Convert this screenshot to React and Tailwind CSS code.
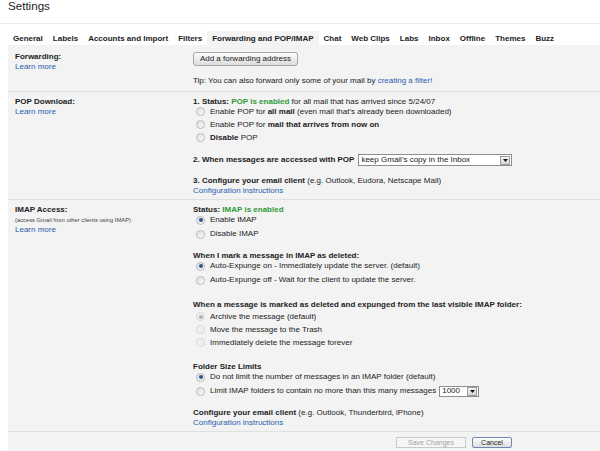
const TABS = [
  "General",
  "Labels",
  "Accounts and Import",
  "Filters",
  "Forwarding and POP/IMAP",
  "Chat",
  "Web Clips",
  "Labs",
  "Inbox",
  "Offline",
  "Themes",
  "Buzz",
];

function A({ children }) {
  return <a className="cursor-pointer text-[#2a5db0]">{children}</a>;
}

function Arrow() {
  return (
    <span className="mr-[1px] flex h-[9px] w-[10px] shrink-0 items-center justify-center border border-[#9c9c9c] bg-gradient-to-b from-[#f7f7f7] to-[#d4d4d4]">
      <svg width="5" height="3" viewBox="0 0 5 3">
        <path d="M0 0h5L2.5 3z" fill="#111" />
      </svg>
    </span>
  );
}

function Radio({ checked, disabled, tall = true, children }) {
  return (
    <div className={`flex items-center pl-[3px] ${tall ? "h-[14px]" : "h-[13px]"}`}>
      <span
        className={`flex h-[9px] w-[9px] shrink-0 items-center justify-center rounded-full border ${
          disabled
            ? "border-[#d6d6d6] bg-[#f0f0f0]"
            : "border-[#b9b9b9] bg-gradient-to-br from-[#dedede] to-[#fbfbfb]"
        }`}
      >
        {checked && (
          <span
            className={`h-[4px] w-[4px] rounded-full ${
              disabled ? "bg-[#b0b0b0]" : "bg-[#2a5894]"
            }`}
          />
        )}
      </span>
      <span className="ml-[5px] whitespace-nowrap">{children}</span>
    </div>
  );
}

function Section({ label, className = "", children }) {
  return (
    <div className={`flex border-b border-[#e0e0e0] ${className}`}>
      <div className="w-[185px] shrink-0 pl-[7px]">{label}</div>
      <div className="min-w-0 flex-1 whitespace-nowrap">{children}</div>
    </div>
  );
}

const Green = ({ children }) => <b className="text-[#2f9a36]">{children}</b>;

export default function App() {
  return (
    <div className="h-[451px] w-[600px] overflow-hidden bg-white font-['Liberation_Sans',Arial,sans-serif] text-[8px] leading-[10px] text-[#222]">
      <div className="h-[24px] border-b border-[#ececec] pl-[8px]">
        <div className="text-[11.6px] leading-[11px]">Settings</div>
      </div>

      <div className="mt-[7px] flex h-[14px] pl-[8px]">
        {TABS.map((tab) => (
          <div
            key={tab}
            className={`whitespace-nowrap px-[5px] font-bold leading-[15px] ${
              tab === "Forwarding and POP/IMAP" ? "bg-[#f3f3f3]" : ""
            }`}
          >
            {tab}
          </div>
        ))}
      </div>

      <div className="ml-[8px] h-[406px] bg-[#f3f3f3]">
        <Section
          className="pt-[7px] pb-[5px]"
          label={
            <>
              <div className="font-bold">Forwarding:</div>
              <A>Learn more</A>
            </>
          }
        >
          <button className="flex h-[14px] w-[105px] items-center justify-center whitespace-nowrap rounded-[3px] border border-[#a6a6a6] bg-gradient-to-b from-[#fdfdfd] to-[#dcdcdc] text-[#222]">
            Add a forwarding address
          </button>
          <div className="mt-[10px]">
            Tip: You can also forward only some of your mail by <A>creating a filter!</A>
          </div>
        </Section>

        <Section
          className="pt-[5px] pb-[3px]"
          label={
            <>
              <div className="font-bold">POP Download:</div>
              <A>Learn more</A>
            </>
          }
        >
          <div>
            <b>1. Status: </b>
            <Green>POP is enabled</Green> for all mail that has arrived since 5/24/07
          </div>
          <div className="-mt-[2px]">
            <Radio tall={false}>
              Enable POP for <b>all mail</b> (even mail that's already been downloaded)
            </Radio>
            <Radio tall={false}>
              Enable POP for <b>mail that arrives from now on</b>
            </Radio>
            <Radio tall={false}>
              <b>Disable</b> POP
            </Radio>
          </div>
          <div className="mt-[10px] flex h-[12px] items-center">
            <b>2. When messages are accessed with POP</b>
            <div className="ml-[4px] flex h-[12px] w-[154px] items-center border border-[#8e8e8e] bg-white">
              <span className="flex-1 pl-[2px]">keep Gmail's copy in the Inbox</span>
              <Arrow />
            </div>
          </div>
          <div className="mt-[10px]">
            <b>3. Configure your email client</b> (e.g. Outlook, Eudora, Netscape Mail)
          </div>
          <A>Configuration instructions</A>
        </Section>

        <Section
          className="pt-[5px] pb-[3px]"
          label={
            <>
              <div className="font-bold">IMAP Access:</div>
              <div className="text-[5.8px] text-[#444]">(access Gmail from other clients using IMAP)</div>
              <A>Learn more</A>
            </>
          }
        >
          <div>
            <b>Status: </b>
            <Green>IMAP is enabled</Green>
          </div>
          <div className="-mt-[2px]">
            <Radio checked>Enable IMAP</Radio>
            <Radio>Disable IMAP</Radio>
          </div>

          <div className="mt-[10px] font-bold">When I mark a message in IMAP as deleted:</div>
          <div className="-mt-[2px]">
            <Radio checked>Auto-Expunge on - Immediately update the server. (default)</Radio>
            <Radio>Auto-Expunge off - Wait for the client to update the server.</Radio>
          </div>

          <div className="mt-[13px] font-bold">
            When a message is marked as deleted and expunged from the last visible IMAP folder:
          </div>
          <div>
            <Radio checked disabled tall={false}>Archive the message (default)</Radio>
            <Radio disabled tall={false}>Move the message to the Trash</Radio>
            <Radio disabled tall={false}>Immediately delete the message forever</Radio>
          </div>

          <div className="mt-[13px] font-bold">Folder Size Limits</div>
          <div className="-mt-[2px]">
            <Radio checked>Do not limit the number of messages in an IMAP folder (default)</Radio>
            <div className="flex items-center">
              <Radio>Limit IMAP folders to contain no more than this many messages</Radio>
              <div className="ml-[3px] flex h-[11px] w-[40px] items-center border border-[#8e8e8e] bg-white">
                <span className="flex-1 pl-[2px]">1000</span>
                <Arrow />
              </div>
            </div>
          </div>

          <div className="mt-[10px]">
            <b>Configure your email client</b> (e.g. Outlook, Thunderbird, iPhone)
          </div>
          <A>Configuration instructions</A>
        </Section>

        <div className="flex justify-end gap-[6px] pt-[5px] pr-[88px]">
          <button className="flex h-[11px] w-[70px] items-center justify-center border border-[#c9c9c9] bg-[#f6f6f6] text-[7px] text-[#a3a3a3]">
            Save Changes
          </button>
          <button className="flex h-[11px] w-[40px] items-center justify-center rounded-[2px] border border-[#7189b0] bg-gradient-to-b from-[#fdfdfd] to-[#dedede] text-[7px] text-[#222]">
            Cancel
          </button>
        </div>
      </div>
    </div>
  );
}
